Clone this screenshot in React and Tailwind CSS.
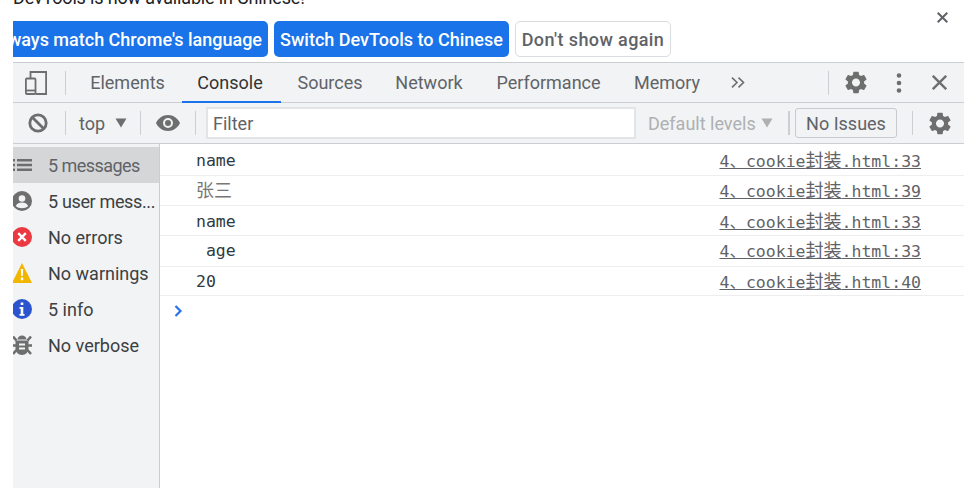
const uiFont = { fontFamily: 'Roboto, "Noto Sans", sans-serif' };

const GEAR =
  "M19.14 12.94c.04-.3.06-.61.06-.94 0-.32-.02-.64-.07-.94l2.03-1.58a.49.49 0 0 0 .12-.61l-1.92-3.32a.488.488 0 0 0-.59-.22l-2.39.96c-.5-.38-1.03-.7-1.62-.94l-.36-2.54a.484.484 0 0 0-.48-.41h-3.84c-.24 0-.43.17-.47.41l-.36 2.54c-.59.24-1.13.57-1.62.94l-2.39-.96c-.22-.08-.47 0-.59.22L2.74 8.87c-.12.21-.08.47.12.61l2.03 1.58c-.05.3-.09.63-.09.94s.02.64.07.94l-2.03 1.58a.49.49 0 0 0-.12.61l1.92 3.32c.12.22.37.29.59.22l2.39-.96c.5.38 1.03.7 1.62.94l.36 2.54c.05.24.24.41.48.41h3.84c.24 0 .44-.17.47-.41l.36-2.54c.59-.24 1.13-.56 1.62-.94l2.39.96c.22.08.47 0 .59-.22l1.92-3.32c.12-.22.07-.47-.12-.61l-2.01-1.58zM12 15.6c-1.98 0-3.6-1.62-3.6-3.6s1.62-3.6 3.6-3.6 3.6 1.62 3.6 3.6-1.62 3.6-3.6 3.6z";

function Gear({ className }) {
  return (
    <svg viewBox="2.4 1.8 19.2 20.4" className={`w-[22px] h-[23px] shrink-0 ${className}`} fill="#6e6e6e">
      <path d={GEAR} />
    </svg>
  );
}

function Divider({ className }) {
  return <div className={`w-px h-6 bg-[#ccced1] shrink-0 ${className}`} />;
}

function Caret({ color, className }) {
  return (
    <svg width="12" height="10" viewBox="0 0 12 10" className={`shrink-0 ${className}`}>
      <path d="M0.5 0.5h11L6 9.5z" fill={color} />
    </svg>
  );
}

const tabs = [
  { label: "Elements", cls: "ml-[26px] w-[71px]" },
  { label: "Console", cls: "ml-[35px] w-[64px]", active: true },
  { label: "Sources", cls: "ml-[35px] w-[66px]" },
  { label: "Network", cls: "ml-[32px] w-[68px]" },
  { label: "Performance", cls: "ml-[36px] w-[99px]" },
  { label: "Memory", cls: "ml-[36px] w-[66px]" },
];

function TabBar() {
  return (
    <div className="h-[41px] flex items-center bg-[#f1f3f4] border-y border-[#cacdd1] shrink-0 text-[18px] text-[#5f6368]">
      <svg width="22" height="24" viewBox="0 0 22 24" className="ml-[12px] shrink-0" fill="none" stroke="#6e6e6e" strokeWidth="1.8">
        <path d="M5.500 7V1h15.600v22H11" />
        <rect x="0.900" y="7.500" width="9.600" height="15.500" rx="1" />
        <path d="M1 19.500h9.500" />
      </svg>
      <Divider className="ml-[18px]" />
      {tabs.map((t) => (
        <div key={t.label} className={`relative h-full flex items-center justify-center whitespace-nowrap ${t.cls} ${t.active ? "text-[#333]" : ""}`}>
          {t.label}
          {t.active && <div className="absolute bottom-[-1px] left-[-16px] right-[-19px] h-[2px] bg-[#1a73e8]" />}
        </div>
      ))}
      <svg width="14" height="11" viewBox="0 0 14 11" className="ml-[31px] shrink-0" fill="none" stroke="#6e6e6e" strokeWidth="1.600">
        <path d="M1 .6l5 4.900-5 4.900M7.500 .6l5 4.900-5 4.900" />
      </svg>
      <Divider className="ml-[83px]" />
      <Gear className="ml-[16px]" />
      <svg width="6" height="20" viewBox="0 0 6 20" className="ml-[29px] shrink-0" fill="#6e6e6e">
        <circle cx="3" cy="2.500" r="2.300" />
        <circle cx="3" cy="10" r="2.300" />
        <circle cx="3" cy="17.500" r="2.300" />
      </svg>
      <svg width="15" height="15" viewBox="0 0 15 15" className="ml-[30px] shrink-0" stroke="#6e6e6e" strokeWidth="2.400">
        <path d="M.8 .8l13.400 13.400M14.200 .8L.8 14.200" />
      </svg>
    </div>
  );
}

function ToolBar() {
  return (
    <div className="h-[41px] flex items-center bg-[#f1f3f4] border-b border-[#cacdd1] shrink-0 text-[18px] text-[#5f6368]">
      <svg width="20" height="20" viewBox="0 0 20 20" className="ml-[15px] shrink-0" fill="none" stroke="#6e6e6e" strokeWidth="2.800">
        <circle cx="10" cy="10" r="8.200" />
        <path d="M4.200 4.200l11.600 11.600" />
      </svg>
      <Divider className="ml-[17px]" />
      <span className="ml-[13px] w-[26px]">top</span>
      <Caret color="#6e6e6e" className="ml-[10px]" />
      <Divider className="ml-[13px]" />
      <svg width="24" height="16" viewBox="0 0 24 16" className="ml-[15px] shrink-0">
        <path fillRule="evenodd" fill="#6e6e6e" d="M12 0C6.600 0 2.200 3.300 0 8c2.200 4.700 6.600 8 12 8s9.800-3.300 12-8c-2.200-4.700-6.600-8-12-8zm0 13a5 5 0 1 1 0-10 5 5 0 0 1 0 10zm0-8a3 3 0 1 0 0 6 3 3 0 0 0 0-6z" />
      </svg>
      <Divider className="ml-[15px]" />
      <div className="ml-[10px] w-[430px] h-[32px] bg-white border-2 border-[#e3e4e6] flex items-center pl-[5px] shrink-0">
        Filter
      </div>
      <span className="ml-[12px] w-[106px] text-[#aeb0b3] whitespace-nowrap">Default levels</span>
      <Caret color="#aeb0b3" className="ml-[7px]" />
      <div className="ml-[15px] w-[2px] h-6 bg-[#ccced1] shrink-0" />
      <div className="ml-[5px] w-[102px] h-[30px] border border-[#c8cacd] rounded-[3px] flex items-center justify-center whitespace-nowrap shrink-0">
        No Issues
      </div>
      <Divider className="ml-[15px]" />
      <Gear className="ml-[16px]" />
    </div>
  );
}

const sideItems = [
  {
    label: "5 messages",
    selected: true,
    tight: "tracking-[-0.55px]",
    icon: (
      <svg width="20" height="20" viewBox="0 0 20 20" fill="#6e6e6e">
        <path d="M0 4h3v2.500H0zM5 4h15v2.500H5zM0 8.800h3v2.500H0zM5 8.800h15v2.500H5zM0 13.500h3V16H0zM5 13.500h15V16H5z" />
      </svg>
    ),
  },
  {
    label: "5 user mess...",
    tight: "tracking-[-0.35px]",
    icon: (
      <svg width="20" height="20" viewBox="0 0 20 20">
        <circle cx="10" cy="10" r="10" fill="#6e6e6e" />
        <circle cx="10" cy="7.500" r="3.300" fill="#f1f3f4" />
        <path d="M3.800 15c1-2.500 3.500-3.500 6.200-3.500s5.200 1 6.200 3.500c-1.500 1.500-3.800 2.200-6.200 2.200s-4.700-.7-6.200-2.200z" fill="#f1f3f4" />
      </svg>
    ),
  },
  {
    label: "No errors",
    icon: (
      <svg width="20" height="20" viewBox="0 0 20 20">
        <circle cx="10" cy="10" r="10" fill="#eb3941" />
        <path d="M6.200 6.200l7.600 7.600M13.800 6.200l-7.600 7.600" stroke="#fff" strokeWidth="2.400" />
      </svg>
    ),
  },
  {
    label: "No warnings",
    icon: (
      <svg width="20" height="20" viewBox="0 0 20 20">
        <path d="M10 0l10 20H0z" fill="#f2b600" />
        <path d="M8.800 6h2.400l-.4 7H9.200zM8.800 14.500h2.400v2.700H8.800z" fill="#fff" />
      </svg>
    ),
  },
  {
    label: "5 info",
    icon: (
      <svg width="20" height="20" viewBox="0 0 20 20">
        <circle cx="10" cy="10" r="10" fill="#2b55cf" />
        <path d="M8.700 3.500h2.600v2.600H8.700zM7.500 8h3.800v7h1.200v1.800h-5V15h1.200V9.800H7.500z" fill="#fff" />
      </svg>
    ),
  },
  {
    label: "No verbose",
    icon: (
      <svg width="20" height="20" viewBox="0 0 20 20" fill="#6e6e6e">
        <path d="M5.500 4.500a4.500 4 0 0 1 9 0zM3.500 5.500h13V14a6.500 6 0 0 1-13 0z" />
        <path d="M1 1.500l3.500 4M19 1.500l-3.500 4M0 10.500H4M20 10.500H16M1 19l3.500-4M19 19l-3.500-4" stroke="#6e6e6e" strokeWidth="2.600" fill="none" />
        <path d="M7 8.500h6v2h-6zM7 12.500h6v2h-6z" fill="#f1f3f4" />
      </svg>
    ),
  },
];

function Sidebar() {
  return (
    <div className="w-[147px] shrink-0 bg-[#f1f3f4] border-r border-[#cacdd1] pt-[3px] text-[18px] overflow-hidden">
      {sideItems.map((s) => (
        <div key={s.label} className={`h-[36px] flex items-center whitespace-nowrap ${s.selected ? "bg-[#d5d6d7] text-[#5f6368]" : "text-[#3c4043]"}`}>
          <div className="w-[20px] h-[20px] ml-[-1px] shrink-0">{s.icon}</div>
          <span className={`ml-[16px] ${s.tight || ""}`}>{s.label}</span>
        </div>
      ))}
    </div>
  );
}

const rows = [
  { text: "name", src: "33", h: "h-[32px] pt-[3px]" },
  { text: "张三", src: "39", h: "h-[30px] pt-[1px]", gray: true },
  { text: "name", src: "33", h: "h-[30px] pt-[3px]" },
  { text: " age", src: "33", h: "h-[31px] pt-[1px]" },
  { text: "20", src: "40", h: "h-[29px] pt-[3px]" },
];

const monoFont = { fontFamily: '"DejaVu Sans Mono", "Noto Sans CJK SC", monospace' };

function Console() {
  return (
    <div className="flex-1 bg-white text-[16.500px] leading-none" style={monoFont}>
      {rows.map((r, i) => (
        <div key={i} className={`${r.h} flex items-center justify-between border-b border-[#eeeeee] pl-[36px] pr-[43px]`}>
          <span className={`whitespace-pre ${r.gray ? "text-[#777] text-[18px]" : "text-[#303942]"}`}>{r.text}</span>
          <span className="underline text-[#5f6368] whitespace-nowrap">
            4、cookie<span className="text-[18px]">封装</span>.html:{r.src}
          </span>
        </div>
      ))}
      <svg width="10" height="12" viewBox="0 0 10 12" className="ml-[14px] mt-[9px]" fill="none" stroke="#2b74e8" strokeWidth="2.200">
        <path d="M1.500 1l5 5-5 5" />
      </svg>
    </div>
  );
}

export default function App() {
  return (
    <div className="w-[964px] h-[488px] bg-white overflow-hidden pl-[13px] flex flex-col" style={uiFont}>
      <div className="h-[62px] shrink-0 relative">
        <div className="text-[18px] text-[#202124] leading-none mt-[-11px] whitespace-nowrap tracking-[-0.16px]">DevTools is now available in Chinese!</div>
        <svg width="11" height="11" viewBox="0 0 11 11" className="absolute right-[16px] top-[12px]" stroke="#5f6368" strokeWidth="2">
          <path d="M.7 .7l9.600 9.600M10.300 .7L.7 10.300" />
        </svg>
        <div className="flex gap-[6px] mt-[14px] text-[18px] font-medium whitespace-nowrap">
          <div className="w-[255px] h-[36px] bg-[#1a73e8] text-white rounded-r-[5px] overflow-hidden flex items-center justify-end pr-[6px]">
            Always match Chrome's language
          </div>
          <div className="w-[235px] h-[36px] bg-[#1a73e8] text-white rounded-[5px] flex items-center justify-center">
            Switch DevTools to Chinese
          </div>
          <div className="w-[156px] h-[36px] border border-[#dadce0] text-[#5f6368] rounded-[5px] flex items-center justify-center tracking-[0.4px]">
            Don't show again
          </div>
        </div>
      </div>
      <TabBar />
      <ToolBar />
      <div className="flex-1 flex min-h-0">
        <Sidebar />
        <Console />
      </div>
    </div>
  );
}
